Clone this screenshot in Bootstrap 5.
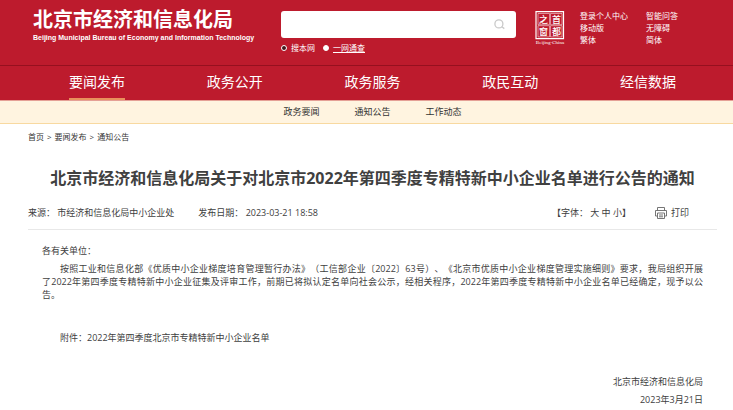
<!DOCTYPE html>
<html lang="zh-CN">
<head>
<meta charset="utf-8">
<meta name="viewport" content="width=device-width, initial-scale=1">
<title>北京市经济和信息化局</title>
<link rel="stylesheet" href="https://cdn.jsdelivr.net/npm/bootstrap@5.3.0/dist/css/bootstrap.min.css">
<style>
body { font-family: "Open Sans", "Noto Sans CJK SC", sans-serif; font-size: 9px; line-height: 12px; color: #404040; background: #fff; text-spacing-trim: space-all; }
a { color: inherit; text-decoration: none; }
.page-x { padding-left: 28px; padding-right: 16px; }
.top-band { background: #bd1b2d; color: #fff; }
.brand-row { min-height: 65px; padding-top: 10px; }
.brand { width: 247px; padding-left: 5px; white-space: nowrap; }
.brand-name { font-size: 20px; line-height: 20px; font-weight: 700; }
.brand-en { font-family: "Liberation Sans", sans-serif; font-size: 7px; line-height: 8px; font-weight: 700; margin-top: 4px; }
.search-area { width: 241px; padding: 1px 0 0 6px; }
.search-box { background: #fff; border-radius: 3px; height: 27px; padding-right: 11px; }
.search-box input { min-width: 0; height: 27px; font-size: 10px; padding: 0 8px; border: 0; background: transparent; outline: 0; }
.search-box button { line-height: 0; }
.scope { font-size: 8px; line-height: 12px; margin-top: 4px; }
.scope input { appearance: none; width: 6px; height: 6px; margin: 0 4px 0 0; border-radius: 50%; background: #fff; border: 1px solid #fff; }
.scope input:checked { background: #40161a; }
.emblem { margin-left: 18px; padding-top: 1px; }
.quick { font-size: 8px; line-height: 12px; display: grid; grid-template-columns: 66px auto; margin-left: 14px; white-space: nowrap; align-content: start; }
.main-nav { border-top: 1px solid #96101f; }
.main-nav .row { line-height: 0; }
.main-nav a { font-size: 14px; line-height: 32px; display: inline-block; border-bottom: 2px solid transparent; }
.main-nav a.active { border-color: #e8915c; }
.sub-nav { background: #fff4e0; border-top: 1px solid #e5a096; border-bottom: 1px solid #f8d9a0; line-height: 22px; color: #333; gap: 35px; }
.crumbs { font-size: 8px; line-height: 12px; padding-top: 7px; color: #333; gap: 3px; }
.headline { font-size: 16px; line-height: 24px; font-weight: 700; margin: 23px 0 0; color: #404040; }
.meta { margin-top: 16px; padding-bottom: 9px; border-bottom: 1px solid #e8e8e8; line-height: 14px; }
.meta button { color: inherit; }
.meta-end { padding-right: 28px; }
.article { padding: 14px 14px 0; line-height: 13px; }
.article p { margin: 0 0 5px; }
.full-line { display: block; text-align: justify; text-align-last: justify; }
.lead-in { padding-left: 18px; }
.article .attach { margin-top: 30px; padding-left: 18px; }
.article .sign { margin-top: 31px; }
</style>
</head>
<body>
<header class="top-band">
  <div class="page-x brand-row d-flex">
    <a class="brand" href="#">
      <div class="brand-name">北京市经济和信息化局</div>
      <div class="brand-en">Beijing Municipal Bureau of Economy and Information Technology</div>
    </a>
    <form class="search-area">
      <div class="search-box d-flex align-items-center">
        <input class="flex-grow-1" type="text" aria-label="搜索">
        <button class="btn p-0 border-0" type="button" aria-label="搜索">
          <svg width="11" height="11" viewBox="0 0 11 11" fill="none" stroke="#c9c9c9" stroke-width="1.3"><circle cx="4.900" cy="4.900" r="4"/><path d="M7.800 7.800l2.500 1.800"/></svg>
        </button>
      </div>
      <div class="scope d-flex">
        <label class="d-flex align-items-center me-2"><input type="radio" name="scope" checked>搜本网</label>
        <label class="d-flex align-items-center"><input type="radio" name="scope"><span class="text-decoration-underline">一网通查</span></label>
      </div>
    </form>
    <a class="emblem" href="#" aria-label="首都之窗">
      <svg width="32" height="34" viewBox="0 0 32 34" fill="none" stroke="#fff">
        <path d="M2 .6h27.500v27H2z" stroke-width="1.2"/>
        <path d="M4 2.500h11.500v11.200H4zM16.500 2.500h11.500v11.200h-11.500zM4 14.700h11.500v11.200H4zM16.500 14.700h11.500v11.200h-11.500z" stroke-width=".5"/>
        <g fill="#fff" stroke="none" font-size="9" font-weight="500" font-family="Noto Sans CJK SC, sans-serif" text-anchor="middle"><text x="9.500" y="11.500">之</text><text x="22.500" y="11.500">首</text><text x="9.500" y="23.700">窗</text><text x="22.500" y="23.700">都</text></g>
        <text x="16" y="33" fill="#fff" stroke="none" font-size="5" font-family="Liberation Serif, serif" text-anchor="middle">Beijing-China</text>
      </svg>
    </a>
    <nav class="quick" aria-label="快捷入口">
      <a href="#">登录个人中心</a><a href="#">智能问答</a>
      <a href="#">移动版</a><a href="#">无障碍</a>
      <a href="#">繁体</a><a href="#">简体</a>
    </nav>
  </div>
  <nav class="main-nav" aria-label="主导航">
    <div class="page-x">
      <div class="row g-0 text-center">
        <div class="col"><a class="active" href="#">要闻发布</a></div>
        <div class="col"><a href="#">政务公开</a></div>
        <div class="col"><a href="#">政务服务</a></div>
        <div class="col"><a href="#">政民互动</a></div>
        <div class="col"><a href="#">经信数据</a></div>
      </div>
    </div>
  </nav>
</header>
<nav class="sub-nav page-x d-flex justify-content-center" aria-label="栏目">
  <a href="#">政务要闻</a><a href="#">通知公告</a><a href="#">工作动态</a>
</nav>
<main class="page-x">
  <div class="crumbs d-flex"><a href="#">首页</a><span>&gt;</span><a href="#">要闻发布</a><span>&gt;</span><a href="#">通知公告</a></div>
  <h1 class="headline text-center">北京市经济和信息化局关于对北京市2022年第四季度专精特新中小企业名单进行公告的通知</h1>
  <div class="meta d-flex justify-content-between">
    <div class="d-flex gap-4"><span>来源： 市经济和信息化局中小企业处</span><span>发布日期： 2023-03-21 18:58</span></div>
    <div class="meta-end d-flex gap-4">
      <span>【字体： <a href="#">大</a> <a href="#">中</a> <a href="#">小</a>】</span>
      <button class="border-0 bg-transparent p-0 d-flex align-items-center gap-1" type="button">
        <svg width="12" height="12" viewBox="0 0 12 12" fill="none" stroke="#666" stroke-width=".9"><path d="M2.500 3.500v-3h7v3M2.500 9H.5V3.500h11V9h-2M2.500 6h7v5.500h-7zM4 8h4M4 9.800h4"/></svg>
        打印
      </button>
    </div>
  </div>
  <article class="article">
    <p>各有关单位：</p>
    <p>
      <span class="full-line lead-in">按照工业和信息化部《优质中小企业梯度培育管理暂行办法》（工信部企业〔2022〕63号）、《北京市优质中小企业梯度管理实施细则》要求，我局组织开展</span>
      <span class="full-line">了2022年第四季度专精特新中小企业征集及评审工作，前期已将拟认定名单向社会公示，经相关程序，2022年第四季度专精特新中小企业名单已经确定，现予以公</span>
      告。
    </p>
    <p class="attach">附件：<a href="#">2022年第四季度北京市专精特新中小企业名单</a></p>
    <p class="sign text-end">北京市经济和信息化局</p>
    <p class="text-end">2023年3月21日</p>
  </article>
</main>
<script src="https://cdn.jsdelivr.net/npm/bootstrap@5.3.0/dist/js/bootstrap.bundle.min.js"></script>
</body>
</html>
